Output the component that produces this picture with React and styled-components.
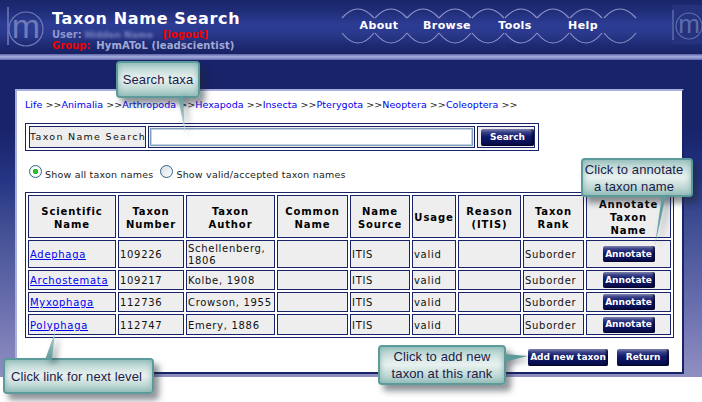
import React from "react";
import styled, { createGlobalStyle } from "styled-components";

const GlobalStyle = createGlobalStyle`
  html, body {
    margin: 0;
    padding: 0;
    background: #fff;
    font-family: "DejaVu Sans", Verdana, sans-serif;
  }
`;

const Page = styled.div`
  position: relative;
  width: 702px;
  height: 402px;
  overflow: hidden;
  background: #fff;
`;

const Header = styled.header`
  display: flex;
  align-items: flex-start;
  height: 54px;
  background: linear-gradient(#1a2669 0, #1e2c76 18%, #2d3c94 45%, #2b3a8e 60%, #1d2a72 85%, #182264 100%);
`;

const Stripe = styled.div`
  height: 6px;
  background: linear-gradient(#5c64a8 0, #a5acdc 45%, #8d94cc 70%, #5a62a6 100%);
`;

const LogoSlot = styled.div`
  flex: none;
  width: 52px;
  height: 54px;
`;

const TitleBlock = styled.div`
  flex: 1;
  padding-top: 8px;
`;

const Title = styled.h1`
  margin: 0;
  color: #fff;
  font-size: 16px;
  line-height: 21px;
  font-weight: bold;
  letter-spacing: 0.65px;
`;

const InfoLine = styled.div`
  height: 11px;
  line-height: 11px;
  font-size: 10px;
  font-weight: bold;
  color: #8f96cc;
  white-space: nowrap;
`;

const BlurName = styled.span`
  display: inline-block;
  width: 68px;
  margin: 0 10px 0 3px;
  filter: blur(1.4px);
  color: #7c85c0;
  font-size: 9px;
`;

const Red = styled.span`
  color: #f00000;
  margin-right: ${(p) => p.$gap || 0}px;
`;

const GroupName = styled.span`
  color: #a4aad6;
  letter-spacing: 0.1px;
`;

const Nav = styled.nav`
  position: relative;
  flex: none;
  display: grid;
  grid-template-columns: repeat(4, 68px);
  width: 272px;
  height: 54px;
  margin-right: 55px;
`;

const NavArcs = styled.svg`
  position: absolute;
  left: -7px;
  top: 0;
`;

const NavItem = styled.a`
  position: relative;
  text-align: center;
  color: #fff;
  font-size: 11px;
  font-weight: bold;
  letter-spacing: 0.4px;
  line-height: 51px;
`;

const SideLogo = styled.div`
  flex: none;
  width: 30px;
  height: 39px;
  margin-top: 5px;
  background: #25337f;
`;

const Main = styled.main`
  height: 317px;
  box-sizing: border-box;
  padding: 29px 0 0 15px;
  background: linear-gradient(#18236a 0, #18236a 22%, #263584 38%, #3c4b90 50%, #6a6fae 78%, #908fc2 100%);
`;

const Panel = styled.section`
  box-sizing: border-box;
  width: 669px;
  height: 285px;
  padding: 7px 8px 0;
  background: #fff;
  border-style: solid;
  border-width: 2px;
  border-color: #a9b0de #18236a #18236a #a9b0de;
`;

const Crumbs = styled.div`
  height: 14px;
  line-height: 14px;
  font-size: 9.5px;
  letter-spacing: 0.05px;
  color: #222;
  white-space: nowrap;
`;

const CrumbLink = styled.a`
  color: #0000ee;
`;

const SearchBox = styled.form`
  display: flex;
  gap: 2px;
  box-sizing: border-box;
  width: 514px;
  height: 28px;
  margin: 11px 0 0;
  padding: 2px 3px 2px 3px;
  border: 1px solid #18236a;
`;

const SearchLabel = styled.div`
  flex: none;
  box-sizing: border-box;
  width: 117px;
  border: 1px solid #18236a;
  background: #eee;
  color: #111;
  font-size: 9.5px;
  line-height: 20px;
  text-align: center;
  letter-spacing: 1.3px;
  white-space: nowrap;
`;

const InputCell = styled.div`
  flex: none;
  box-sizing: border-box;
  width: 327px;
  padding: 1px;
  border: 1px solid #18236a;
  background: #eee;
`;

const SearchInput = styled.input`
  display: block;
  box-sizing: border-box;
  width: 100%;
  height: 18px;
  border: 1px solid #7f9db9;
  outline: 1px solid #c3d0e0;
  outline-offset: -2px;
  background: #fff;
`;

const ButtonCell = styled.div`
  flex: 1;
  display: flex;
  align-items: center;
  justify-content: flex-end;
  border: 1px solid #18236a;
  background: #eee;
`;

const NavyButton = styled.button`
  box-sizing: border-box;
  width: ${(p) => p.$w}px;
  height: ${(p) => p.$h || 17}px;
  padding: 0;
  border: 0;
  border-radius: 2px;
  background: linear-gradient(#8388b4 0, #3a4288 18%, #10186a 45%, #070b48 100%);
  box-shadow: inset -2px -1px 2px rgba(0, 0, 25, 0.65);
  color: #fff;
  font-family: "DejaVu Sans", Verdana, sans-serif;
  font-size: 9px;
  font-weight: bold;
  letter-spacing: 0;
  line-height: 15px;
  white-space: nowrap;
`;

const RadioRow = styled.div`
  box-sizing: border-box;
  display: flex;
  align-items: center;
  height: 41px;
  padding: 6px 0 0 4px;
  font-size: 9.5px;
  letter-spacing: 0.2px;
  color: #222;
`;

const RadioLabel = styled.label`
  display: flex;
  align-items: center;
  white-space: nowrap;
  margin-right: 7px;
`;

const Radio = styled.input`
  appearance: none;
  box-sizing: border-box;
  width: 13px;
  height: 13px;
  margin: -6px 3px 0 0;
  border: 1px solid #2f6584;
  border-radius: 50%;
  background: linear-gradient(135deg, #d5dde4, #fff);
  &:checked {
    background: radial-gradient(circle, #2fd02f 0, #22b522 2.4px, #fff 3px, #e8edf2 100%);
  }
`;

const Table = styled.table`
  table-layout: fixed;
  border-collapse: separate;
  border-spacing: 2px;
  width: 649px;
  border: 1px solid #18236a;
  font-size: 10px;
  letter-spacing: 0.7px;
  color: #111;
`;

const HeadCell = styled.th`
  box-sizing: border-box;
  height: 42px;
  padding: 2px 0 0;
  border: 1px solid #18236a;
  background: #eee;
  font-size: 10px;
  line-height: 13px;
  letter-spacing: 0.9px;
  font-weight: bold;
  color: #000;
  text-align: center;
`;

const Cell = styled.td`
  box-sizing: border-box;
  height: ${(p) => p.$h}px;
  padding: ${(p) => (p.$center ? "0" : "2px 0 0 1px")};
  border: 1px solid #18236a;
  background: #eee;
  line-height: 12px;
  text-align: ${(p) => (p.$center ? "center" : "left")};
`;

const TaxonLink = styled.a`
  color: #0000ee;
  text-decoration: underline;
`;

const Footer = styled.div`
  display: flex;
  justify-content: flex-end;
  gap: 9px;
  width: 644px;
  margin-top: 11px;
`;

const Callout = styled.div`
  position: absolute;
  left: ${(p) => p.$x}px;
  top: ${(p) => p.$y}px;
  width: ${(p) => p.$w}px;
  height: ${(p) => p.$h}px;
  box-sizing: border-box;
  display: flex;
  align-items: center;
  justify-content: center;
  text-align: center;
  border: 2px solid #5d9a9a;
  border-radius: 4px;
  background: linear-gradient(#a9cbc8 0, #dbe9e7 35%, #e8f1ef 50%, #c5dcd9 75%, #a2c6c4 100%);
  box-shadow: inset 0 0 6px #86b4b0, 5px 6px 6px rgba(30, 40, 50, 0.5);
  color: #1b1b4a;
  font-family: "Liberation Sans", Arial, sans-serif;
  font-size: 13px;
  line-height: 17px;
  letter-spacing: 0.1px;
  white-space: nowrap;
`;

const CalloutText = styled.div`
  position: relative;
  margin-right: ${(p) => p.$shift || 0}px;
`;

const TailSvg = styled.svg`
  position: absolute;
  left: 0;
  top: 0;
  overflow: visible;
  filter: drop-shadow(4px 3px 3px rgba(30, 40, 50, 0.45));
`;

const logoMark = (cx, cy, r, lineX, lineTop, lineBottom, size, color) => (
  <g stroke={color} fill="none">
    <line x1={lineX} y1={lineTop} x2={lineX} y2={lineBottom} strokeWidth="1.5" />
    <circle cx={cx} cy={cy} r={r} strokeWidth="1.2" />
    <text x={cx} y={cy + size * 0.27} fontSize={size} fontFamily="Liberation Sans, Arial, sans-serif" textAnchor="middle" fill={color} stroke="none">m</text>
  </g>
);

const arcCenters = [20, 53, 85, 117, 150, 183, 215, 248, 282];
const rows = [
  { name: "Adephaga", num: "109226", author: "Schellenberg, 1806", h: 28 },
  { name: "Archostemata", num: "109217", author: "Kolbe, 1908", h: 20 },
  { name: "Myxophaga", num: "112736", author: "Crowson, 1955", h: 20 },
  { name: "Polyphaga", num: "112747", author: "Emery, 1886", h: 21 },
];
const columns = [88, 66, 89, 71, 60, 44, 63, 61, 85];
const heads = [
  ["Scientific", "Name"],
  ["Taxon", "Number"],
  ["Taxon", "Author"],
  ["Common", "Name"],
  ["Name", "Source"],
  ["Usage"],
  ["Reason", "(ITIS)"],
  ["Taxon", "Rank"],
  ["Annotate", "Taxon", "Name"],
];
const crumbs = ["Life", "Animalia", "Arthropoda", "Hexapoda", "Insecta", "Pterygota", "Neoptera", "Coleoptera"];

// tail points are local to the bubble's padding box
const callouts = [
  { id: "t1", x: 116, y: 61, w: 84, h: 37, pts: "60,33 65,33 67,70", from: "#5d9a9a", to: "#d6e4e4", label: ["Search taxa"] },
  { id: "t2", x: 581, y: 158, w: 112, h: 39, shift: 6, pts: "79,35 83,35 72,85", from: "#5d9a9a", to: "#6ea8a8", label: ["Click to annotate", "a taxon name"] },
  { id: "t3", x: 3, y: 358, w: 151, h: 36, shift: 4, pts: "40,0 47,0 50,-28", from: "#b8d0d0", to: "#5d9a9a", label: ["Click link for next level"] },
  { id: "t4", x: 378, y: 345, w: 128, h: 40, pts: "124,7 124,15 148,9", from: "#5d9a9a", to: "#5d9a9a", label: ["Click to add new", "taxon at this rank"] },
];

const App = () => {
  return (
    <Page>
      <GlobalStyle />
      <Header>
        <LogoSlot>
          <svg width="52" height="54">{logoMark(26, 29, 17, 8, 7, 45, 34, "#6f7cb8")}</svg>
        </LogoSlot>
        <TitleBlock>
          <Title>Taxon Name Search</Title>
          <InfoLine>
            User:<BlurName>Hidden Name</BlurName><Red>[logout]</Red>
          </InfoLine>
          <InfoLine>
            <Red $gap={6}>Group:</Red><GroupName>HymAToL (leadscientist)</GroupName>
          </InfoLine>
        </TitleBlock>
        <Nav>
          <NavArcs width="300" height="54">
            {arcCenters.map((c) => (
              <g key={c} stroke="#8a93c6" strokeWidth="1.2" fill="none">
                <path d={`M${c - 16} 18 Q${c} 0 ${c + 16} 18`} />
                <path d={`M${c - 16} 33 Q${c} 53 ${c + 16} 33`} />
              </g>
            ))}
          </NavArcs>
          <NavItem>About</NavItem>
          <NavItem>Browse</NavItem>
          <NavItem>Tools</NavItem>
          <NavItem>Help</NavItem>
        </Nav>
        <SideLogo>
          <svg width="30" height="39">{logoMark(17, 21, 13, 1, 5, 35, 26, "#5d6cae")}</svg>
        </SideLogo>
      </Header>
      <Stripe />
      <Main>
        <Panel>
          <Crumbs>
            {crumbs.map((c) => (
              <React.Fragment key={c}>
                <CrumbLink>{c}</CrumbLink>{" >>"}
              </React.Fragment>
            ))}
          </Crumbs>
          <SearchBox>
            <SearchLabel>Taxon Name Search</SearchLabel>
            <InputCell><SearchInput /></InputCell>
            <ButtonCell><NavyButton type="button" $w={53}>Search</NavyButton></ButtonCell>
          </SearchBox>
          <RadioRow>
            <RadioLabel><Radio type="radio" name="show" defaultChecked />Show all taxon names</RadioLabel>
            <RadioLabel><Radio type="radio" name="show" />Show valid/accepted taxon names</RadioLabel>
          </RadioRow>
          <Table>
            <colgroup>
              {columns.map((w, i) => <col key={i} width={w} />)}
            </colgroup>
            <thead>
              <tr>
                {heads.map((lines, i) => (
                  <HeadCell key={i}>
                    {lines.map((l) => <div key={l}>{l}</div>)}
                  </HeadCell>
                ))}
              </tr>
            </thead>
            <tbody>
              {rows.map((r) => (
                <tr key={r.name}>
                  <Cell $h={r.h}><TaxonLink>{r.name}</TaxonLink></Cell>
                  <Cell $h={r.h}>{r.num}</Cell>
                  <Cell $h={r.h}>{r.author}</Cell>
                  <Cell $h={r.h} />
                  <Cell $h={r.h}>ITIS</Cell>
                  <Cell $h={r.h}>valid</Cell>
                  <Cell $h={r.h} />
                  <Cell $h={r.h}>Suborder</Cell>
                  <Cell $h={r.h} $center><NavyButton type="button" $w={52} $h={16}>Annotate</NavyButton></Cell>
                </tr>
              ))}
            </tbody>
          </Table>
          <Footer>
            <NavyButton type="button" $w={80}>Add new taxon</NavyButton>
            <NavyButton type="button" $w={52}>Return</NavyButton>
          </Footer>
        </Panel>
      </Main>
      {callouts.map((t) => (
        <Callout key={t.id} $x={t.x} $y={t.y} $w={t.w} $h={t.h}>
          <TailSvg width={t.w} height={t.h}>
            <defs>
              <linearGradient id={t.id} x1="0" y1="0" x2="0" y2="1">
                <stop offset="0" stopColor={t.from} />
                <stop offset="1" stopColor={t.to} />
              </linearGradient>
            </defs>
            <polygon points={t.pts} fill={`url(#${t.id})`} />
          </TailSvg>
          <CalloutText $shift={t.shift}>
            {t.label.map((l) => <div key={l}>{l}</div>)}
          </CalloutText>
        </Callout>
      ))}
    </Page>
  );
};

export default App;
